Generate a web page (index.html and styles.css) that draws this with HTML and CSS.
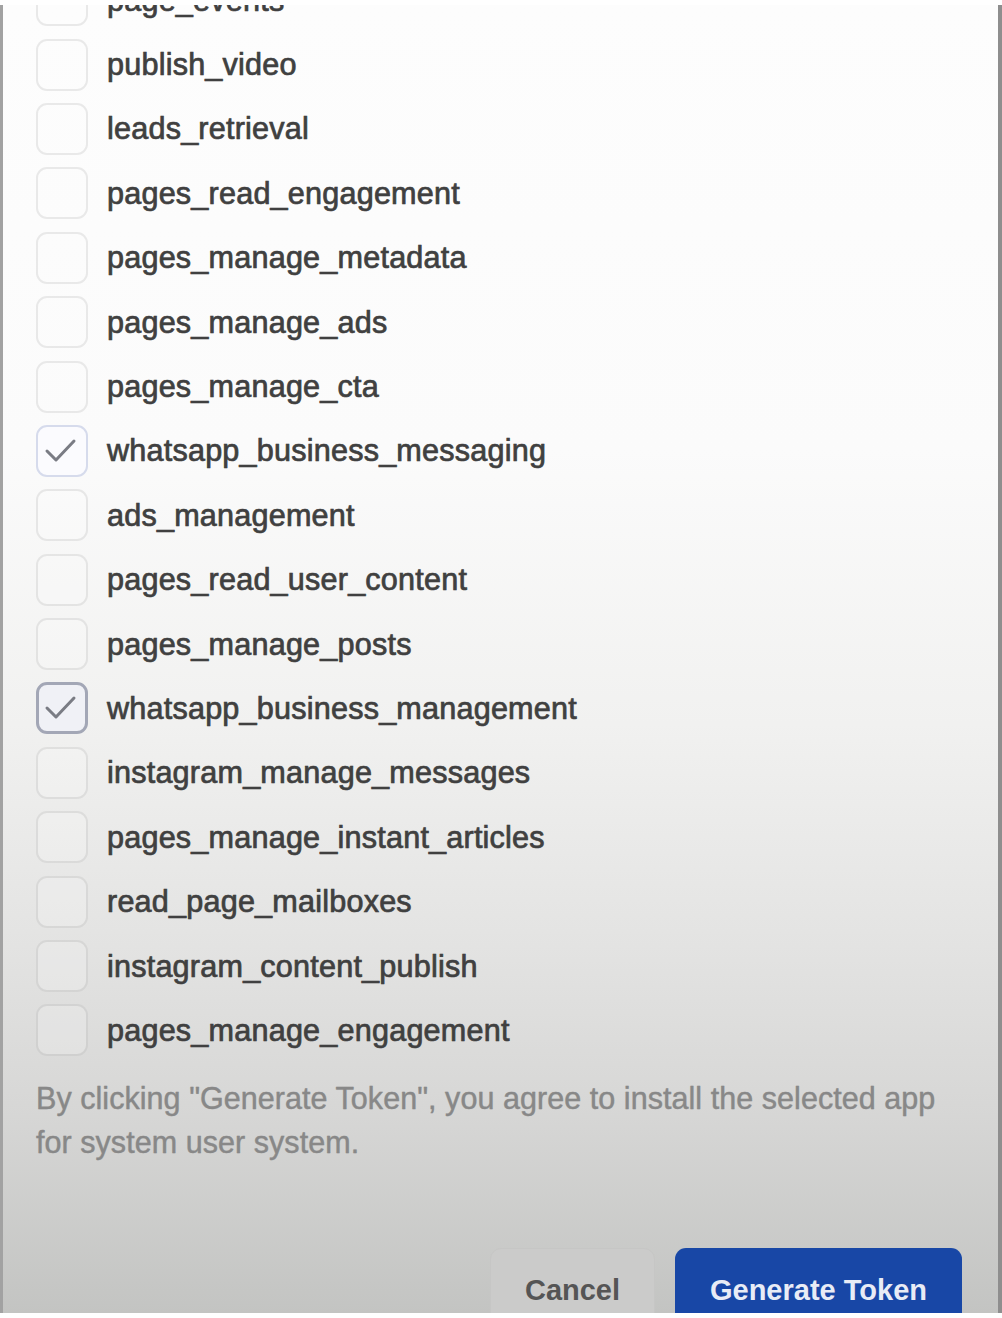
FILE: index.html
```html
<!DOCTYPE html>
<html lang="en">
<head>
<meta charset="utf-8">
<title>Generate Token</title>
<link rel="stylesheet" href="styles.css">
</head>
<body>
<div class="frame">
  <ul class="perms">
    <li class="perm"><span class="box"></span><span class="label">page_events</span></li>
    <li class="perm"><span class="box"></span><span class="label">publish_video</span></li>
    <li class="perm"><span class="box"></span><span class="label">leads_retrieval</span></li>
    <li class="perm"><span class="box"></span><span class="label">pages_read_engagement</span></li>
    <li class="perm"><span class="box"></span><span class="label">pages_manage_metadata</span></li>
    <li class="perm"><span class="box"></span><span class="label">pages_manage_ads</span></li>
    <li class="perm"><span class="box"></span><span class="label">pages_manage_cta</span></li>
    <li class="perm"><span class="box checked light"><svg viewBox="0 0 52 52" class="tick"><polyline points="11,26 20,35 38,16"/></svg></span><span class="label">whatsapp_business_messaging</span></li>
    <li class="perm"><span class="box"></span><span class="label">ads_management</span></li>
    <li class="perm"><span class="box"></span><span class="label">pages_read_user_content</span></li>
    <li class="perm"><span class="box"></span><span class="label">pages_manage_posts</span></li>
    <li class="perm"><span class="box checked dark"><svg viewBox="0 0 52 52" class="tick"><polyline points="11,26 20,35 38,16"/></svg></span><span class="label">whatsapp_business_management</span></li>
    <li class="perm"><span class="box"></span><span class="label">instagram_manage_messages</span></li>
    <li class="perm"><span class="box"></span><span class="label">pages_manage_instant_articles</span></li>
    <li class="perm"><span class="box"></span><span class="label">read_page_mailboxes</span></li>
    <li class="perm"><span class="box"></span><span class="label">instagram_content_publish</span></li>
    <li class="perm"><span class="box"></span><span class="label">pages_manage_engagement</span></li>
  </ul>
  <p class="notice">By clicking "Generate Token", you agree to install the selected app<br>for system user system.</p>
  <div class="actions">
    <button class="btn cancel">Cancel</button>
    <button class="btn primary">Generate Token</button>
  </div>
</div>
</body>
</html>
```
FILE: styles.css
```css
html, body {
  margin: 0;
  padding: 0;
  background: #ffffff;
}
body {
  width: 1002px;
  height: 1318px;
  overflow: hidden;
  font-family: "Liberation Sans", Arial, sans-serif;
}
.frame {
  margin-top: 5px;
  height: 1308px;
  box-sizing: border-box;
  border-left: 3px solid #a2a2a2;
  border-right: 4px solid #8e8e8e;
  background: linear-gradient(to bottom, #fdfdfd 0%, #fbfbfb 34%, #f1f1f0 55%, #e3e3e2 72%, #d6d6d5 85%, #c3c4c2 100%);
  overflow: hidden;
  display: flex;
  flex-direction: column;
}
.perms {
  list-style: none;
  margin: -37px 0 0 0;
  padding: 0;
}
.perm {
  height: 64.4px;
  display: flex;
  align-items: center;
  padding-left: 33px;
  gap: 19px;
}
.box {
  width: 52px;
  height: 52px;
  box-sizing: border-box;
  border: 2px solid rgba(0,0,0,0.08);
  border-radius: 11px;
  background: rgba(255,255,255,0.2);
  display: flex;
  align-items: center;
  justify-content: center;
  flex: none;
}
.box.checked.light {
  border-color: #d6dbec;
  background: #fbfbfe;
}
.box.checked.dark {
  border: 3px solid #a3a7b6;
  background: #f0f1f6;
}
.tick {
  width: 52px;
  height: 52px;
  flex: none;
}
.tick polyline {
  fill: none;
  stroke: #7a7c84;
  stroke-width: 3;
  stroke-linecap: round;
  stroke-linejoin: round;
}
.label {
  font-size: 30.6px;
  color: #404040;
  letter-spacing: 0.2px;
  -webkit-text-stroke: 0.6px #404040;
  text-shadow: 0 0 1px rgba(0,0,0,0.3);
}
.notice {
  margin: 13px 0 0 33px;
  font-size: 30.5px;
  line-height: 44px;
  letter-spacing: 0.05px;
  color: #888888;
  -webkit-text-stroke: 0.3px #888888;
  text-shadow: 0 0 1px rgba(0,0,0,0.15);
}
.actions {
  margin-top: auto;
  display: flex;
  justify-content: flex-end;
  gap: 20px;
  padding-right: 36px;
  margin-bottom: -19px;
}
.btn {
  height: 84px;
  border-radius: 11px;
  font-family: "Liberation Sans", Arial, sans-serif;
  font-weight: bold;
  font-size: 29px;
  border: none;
  padding: 0;
}
.cancel {
  width: 165px;
  background: #cbcbca;
  border: 1px solid #c6c6c5;
  color: #555555;
}
.primary {
  width: 287px;
  background: #1847a6;
  color: #e8ecf6;
}
```
